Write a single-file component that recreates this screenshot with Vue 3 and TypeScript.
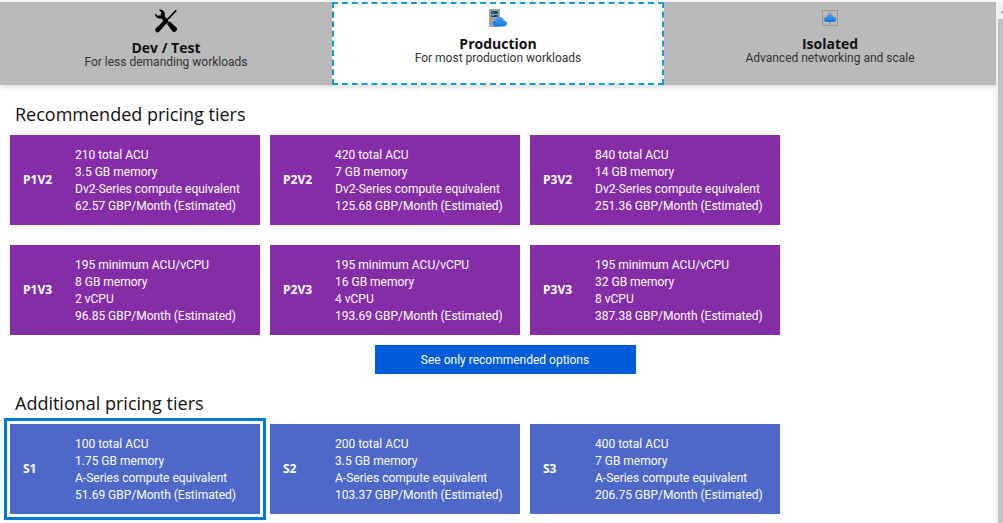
<script setup lang="ts">
import { ref } from 'vue'

interface Category {
  id: string
  title: string
  note: string
}

interface Tier {
  name: string
  lines: string[]
}

const categories: Category[] = [
  { id: 'dev', title: 'Dev / Test', note: 'For less demanding workloads' },
  { id: 'production', title: 'Production', note: 'For most production workloads' },
  { id: 'isolated', title: 'Isolated', note: 'Advanced networking and scale' },
]

const dv2 = 'Dv2-Series compute equivalent'
const aSeries = 'A-Series compute equivalent'
const minimum = '195 minimum ACU/vCPU'

const recommended: Tier[] = [
  { name: 'P1V2', lines: ['210 total ACU', '3.5 GB memory', dv2, '62.57 GBP/Month (Estimated)'] },
  { name: 'P2V2', lines: ['420 total ACU', '7 GB memory', dv2, '125.68 GBP/Month (Estimated)'] },
  { name: 'P3V2', lines: ['840 total ACU', '14 GB memory', dv2, '251.36 GBP/Month (Estimated)'] },
  { name: 'P1V3', lines: [minimum, '8 GB memory', '2 vCPU', '96.85 GBP/Month (Estimated)'] },
  { name: 'P2V3', lines: [minimum, '16 GB memory', '4 vCPU', '193.69 GBP/Month (Estimated)'] },
  { name: 'P3V3', lines: [minimum, '32 GB memory', '8 vCPU', '387.38 GBP/Month (Estimated)'] },
]

const additional: Tier[] = [
  { name: 'S1', lines: ['100 total ACU', '1.75 GB memory', aSeries, '51.69 GBP/Month (Estimated)'] },
  { name: 'S2', lines: ['200 total ACU', '3.5 GB memory', aSeries, '103.37 GBP/Month (Estimated)'] },
  { name: 'S3', lines: ['400 total ACU', '7 GB memory', aSeries, '206.75 GBP/Month (Estimated)'] },
]

const category = ref('production')
const selected = ref('S1')
const showAdditional = ref(true)
</script>

<template>
  <div class="page">
    <main class="content">
      <div class="tabs" role="tablist">
        <button
          v-for="c in categories"
          :key="c.id"
          type="button"
          role="tab"
          class="tab"
          :class="[c.id, { active: c.id === category }]"
          :aria-selected="c.id === category"
          @click="category = c.id"
        >
          <svg v-if="c.id === 'dev'" class="icon large" viewBox="0 0 24 24" aria-hidden="true">
            <path d="M21.6 .8 22.8 2 13.6 11.4 12.4 10.4z" />
            <path d="M14.1 13.2 15.6 12.2 22.4 18.6Q23.6 20 22.6 21.4L21.2 22.8Q19.8 23.6 18.6 22.2L13.2 15.2z" />
            <path d="M5 .6Q8.8-.1 10.4 3.1 11.3 5.2 10.6 7.2L13.6 10.4 12.6 14.2 4.8 23.1Q3 24 1.6 22.2 .8 20.6 1.8 19.6L9.4 11.9 7.6 9.6Q4.4 10.2 2.2 8.1 .9 6.5 1 4.4L3.8 6.8 6.6 6.2 7.3 3.6z" />
            <circle cx="11.6" cy="12.2" r="2.5" />
          </svg>
          <svg v-else-if="c.id === 'production'" class="icon" viewBox="0 0 18 18" aria-hidden="true">
            <defs>
              <linearGradient id="cloud-a" x1="0" y1="0" x2="0" y2="1">
                <stop offset="0" stop-color="#4a9df2" />
                <stop offset="1" stop-color="#1877de" />
              </linearGradient>
            </defs>
            <rect x="0" y="0" width="11" height="18" rx="1" fill="#a3a3a3" />
            <rect x="2" y="2" width="7" height="3" rx="1" fill="#064a80" />
            <rect x="2" y="6" width="7" height="2" rx="1" fill="#064a80" />
            <rect x="3" y="3" width="2" height="1" fill="#2fa8dc" />
            <rect x="3" y="6" width="2" height="1" fill="#2fa8dc" />
            <path d="M7 17.5C4.9 17.5 3.5 16.3 3.5 14.4S4.8 11.5 6.4 11.3C6.9 9.2 8.5 8 10.7 8s3.8 1.3 4.2 3.5c1.9.1 3.1 1.3 3.1 3s-1.4 3-3.3 3z" fill="url(#cloud-a)" />
          </svg>
          <svg v-else class="icon" viewBox="0 0 18 18" aria-hidden="true">
            <defs>
              <linearGradient id="cloud-b" x1="0" y1="0" x2="0" y2="1">
                <stop offset="0" stop-color="#4a9df2" />
                <stop offset="1" stop-color="#1877de" />
              </linearGradient>
            </defs>
            <rect x="1.5" y="1.5" width="15" height="15" fill="none" stroke="#999" />
            <path d="M8.5 1v16M9.5 1v16M1 8.5h16M1 9.5h16" stroke="#a3a3a3" />
            <path d="M5.6 13C4 13 3 12.2 3 10.8s1-2.2 2.3-2.4C5.8 6.2 7.2 4.9 9 4.9s3.2 1.3 3.5 3.4c1.5.2 2.5 1.1 2.5 2.5s-1 2.2-2.5 2.2z" fill="url(#cloud-b)" />
          </svg>
          <span class="title">{{ c.title }}</span>
          <span class="note">{{ c.note }}</span>
        </button>
      </div>

      <section class="section">
        <h2 class="heading">Recommended pricing tiers</h2>
        <div class="grid">
          <button
            v-for="t in recommended"
            :key="t.name"
            type="button"
            class="card premium"
            :class="{ selected: t.name === selected }"
            :aria-pressed="t.name === selected"
            @click="selected = t.name"
          >
            <span class="name">{{ t.name }}</span>
            <span class="details">
              <span v-for="line in t.lines" :key="line" class="line">{{ line }}</span>
            </span>
          </button>
        </div>
      </section>

      <div class="toggle-row">
        <button type="button" class="toggle" @click="showAdditional = !showAdditional">
          {{ showAdditional ? 'See only recommended options' : 'See additional options' }}
        </button>
      </div>

      <section v-if="showAdditional" class="section">
        <h2 class="heading">Additional pricing tiers</h2>
        <div class="grid">
          <button
            v-for="t in additional"
            :key="t.name"
            type="button"
            class="card standard"
            :class="{ selected: t.name === selected }"
            :aria-pressed="t.name === selected"
            @click="selected = t.name"
          >
            <span class="name">{{ t.name }}</span>
            <span class="details">
              <span v-for="line in t.lines" :key="line" class="line">{{ line }}</span>
            </span>
          </button>
        </div>
      </section>
    </main>
    <div class="scrollbar" aria-hidden="true">
      <svg class="arrow" viewBox="0 0 7 17">
        <path d="M7 9v2H5v-1h1v-1z" fill="#8f8f8f" />
      </svg>
      <div class="thumb"></div>
    </div>
  </div>
</template>

<style>
body {
  background: #fff;
}
</style>

<style scoped>
.page {
  box-sizing: border-box;
  display: flex;
  min-height: 100vh;
  padding-top: 2px;
  font-family: Roboto, "Open Sans", sans-serif;
  font-size: 12px;
  color: #111;
}

button {
  margin: 0;
  border: 0;
  font: inherit;
  color: inherit;
  cursor: pointer;
}

.content {
  flex: 1;
  min-width: 0;
}

.tabs {
  display: grid;
  grid-template-columns: repeat(3, 1fr);
  box-shadow: 0 1px 6px rgba(0, 0, 0, 0.2);
}

.tab {
  display: flex;
  flex-direction: column;
  align-items: center;
  min-height: 83px;
  padding: 5px 8px 10px;
  border: 2px solid transparent;
  background: #bababa;
}

.tab.active {
  border: 2px dashed #0f9fcf;
  background: #fff;
}

.icon {
  width: 18px;
  height: 18px;
  margin-bottom: 8px;
}

.icon.large {
  width: 24px;
  height: 24px;
  margin-bottom: 6px;
}

.title {
  font-family: "Open Sans", sans-serif;
  font-size: 14px;
  line-height: 17px;
  font-weight: 700;
}

.note {
  line-height: 12px;
  color: #333;
}

.section {
  padding: 0 10px;
}

.heading {
  margin: 0;
  padding: 17px 5px 9px;
  font-family: "Open Sans", sans-serif;
  font-size: 18px;
  line-height: 24px;
  font-weight: 400;
}

.grid {
  display: grid;
  grid-template-columns: repeat(auto-fill, 250px);
  gap: 20px 10px;
}

.card {
  display: flex;
  align-items: center;
  min-height: 90px;
  padding: 0 0 0 13px;
  color: #fff;
  text-align: left;
}

.premium {
  background: #852da6;
}

.standard {
  background: #4d68c9;
}

.card.selected {
  outline: 3px solid #0078d4;
  outline-offset: 3px;
}

.name {
  width: 52px;
  font-family: "Open Sans", sans-serif;
  line-height: 16px;
  font-weight: 700;
}

.details {
  padding-top: 2px;
}

.line {
  display: block;
  line-height: 17px;
  white-space: nowrap;
}

.toggle-row {
  display: flex;
  justify-content: center;
  padding: 10px 0 0 14px;
}

.toggle {
  width: 261px;
  padding: 7px 8px 5px;
  background: #015cda;
  color: #fff;
  line-height: 17px;
}

.scrollbar {
  display: flex;
  flex-direction: column;
  width: 7px;
  background: #f1f1f1;
}

.arrow {
  height: 17px;
}

.thumb {
  flex: 1;
  margin-left: 2px;
  background: #c1c1c1;
}
</style>
